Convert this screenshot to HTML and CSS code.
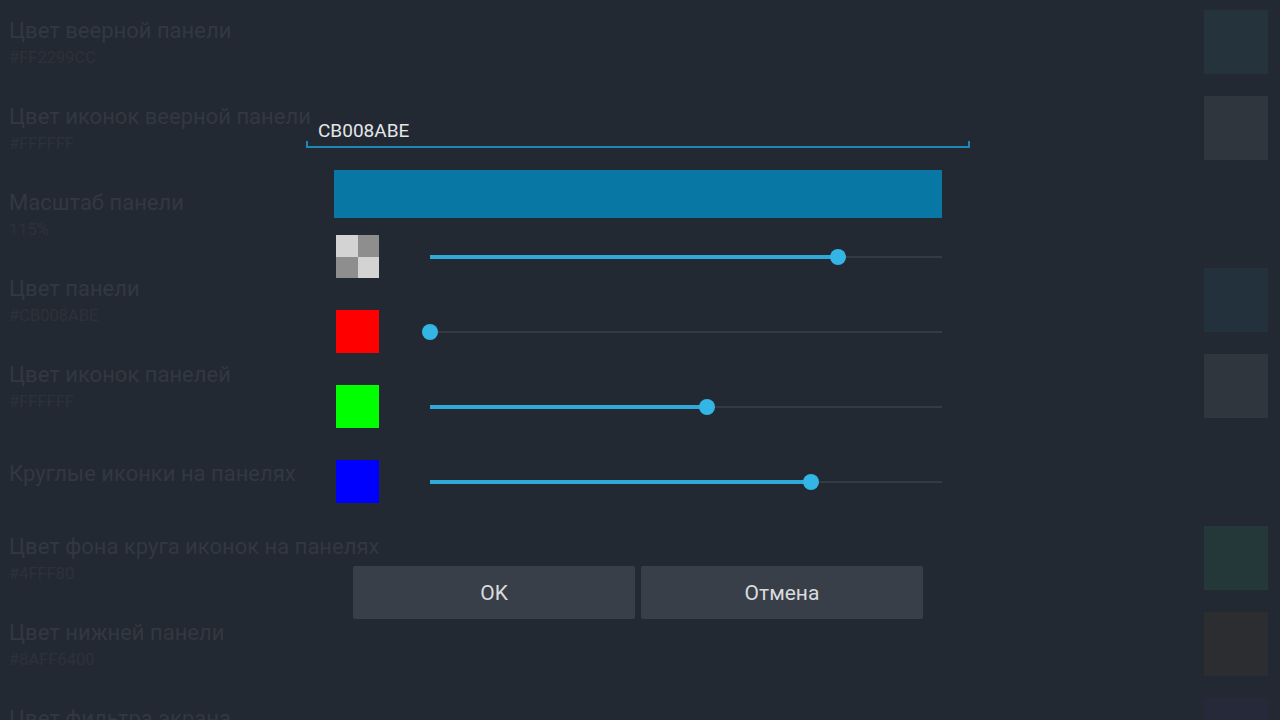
FILE: index.html
```html
<html>
    <head>
        <meta charset="utf-8">
        <meta name="viewport" content="width=device-width">
        <title>Цвет панели</title>
        <link rel="stylesheet" href="styles.css">
    </head>
    <body>
        <div id="list">
            <div class="item">
                <div class="text"><p class="title">Цвет веерной панели</p><p class="sub">#FF2299CC</p></div>
                <div class="swatch sw-fan"></div>
            </div>
            <div class="item">
                <div class="text"><p class="title">Цвет иконок веерной панели</p><p class="sub">#FFFFFF</p></div>
                <div class="swatch sw-white"></div>
            </div>
            <div class="item">
                <div class="text"><p class="title">Масштаб панели</p><p class="sub">115%</p></div>
            </div>
            <div class="item">
                <div class="text"><p class="title">Цвет панели</p><p class="sub">#CB008ABE</p></div>
                <div class="swatch sw-panel"></div>
            </div>
            <div class="item">
                <div class="text"><p class="title">Цвет иконок панелей</p><p class="sub">#FFFFFF</p></div>
                <div class="swatch sw-white"></div>
            </div>
            <div class="item">
                <div class="text"><p class="title">Круглые иконки на панелях</p></div>
            </div>
            <div class="item">
                <div class="text"><p class="title">Цвет фона круга иконок на панелях</p><p class="sub">#4FFF80</p></div>
                <div class="swatch sw-green"></div>
            </div>
            <div class="item">
                <div class="text"><p class="title">Цвет нижней панели</p><p class="sub">#8AFF6400</p></div>
                <div class="swatch sw-bottom"></div>
            </div>
            <div class="item">
                <div class="text"><p class="title">Цвет фильтра экрана</p><p class="sub">#00000000</p></div>
                <div class="swatch sw-filter"></div>
            </div>
        </div>

        <div id="dialog">
            <div class="hex-field">CB008ABE</div>
            <div class="preview"></div>

            <div class="channel">
                <div class="chip chip-alpha"><span></span><span></span><span></span><span></span></div>
                <div class="slider">
                    <div class="track"></div>
                    <div class="fill" style="width: 408px"></div>
                    <div class="thumb" style="left: 408px"></div>
                </div>
            </div>
            <div class="channel">
                <div class="chip chip-red"></div>
                <div class="slider">
                    <div class="track"></div>
                    <div class="fill" style="width: 0px"></div>
                    <div class="thumb" style="left: 0px"></div>
                </div>
            </div>
            <div class="channel">
                <div class="chip chip-green"></div>
                <div class="slider">
                    <div class="track"></div>
                    <div class="fill" style="width: 277px"></div>
                    <div class="thumb" style="left: 277px"></div>
                </div>
            </div>
            <div class="channel">
                <div class="chip chip-blue"></div>
                <div class="slider">
                    <div class="track"></div>
                    <div class="fill" style="width: 381px"></div>
                    <div class="thumb" style="left: 381px"></div>
                </div>
            </div>

            <div class="buttons">
                <button>OK</button>
                <button>Отмена</button>
            </div>
        </div>
    </body>
</html>
```

FILE: styles.css
```css
body {
    margin: 0;
    height: 720px;
    overflow: hidden;
    background-color: #232932;
    font-family: 'Roboto', sans-serif;
}
p {
    margin: 0;
}
#list {
    display: flex;
    flex-direction: column;
}
.item {
    height: 86px;
    flex-shrink: 0;
    display: flex;
    align-items: center;
    justify-content: space-between;
    padding: 0 12px 0 9px;
}
.text {
    padding-top: 2px;
}
.title {
    font-size: 22px;
    line-height: 28px;
    color: #323841;
}
.sub {
    font-size: 16.5px;
    line-height: 26px;
    color: #2c323a;
}
.swatch {
    width: 64px;
    height: 64px;
    margin-top: -3px;
}
.sw-fan { background-color: #25333c; }
.sw-white { background-color: #30363e; }
.sw-panel { background-color: #22313b; }
.sw-green { background-color: #24383a; }
.sw-bottom { background-color: #2b2d31; }
.sw-filter { background-color: #25293a; }

/* dialog lies over the dimmed list */
#dialog {
    position: absolute;
    left: 306px;
    top: 108px;
    width: 664px;
}
.hex-field {
    position: relative;
    height: 30px;
    padding: 8px 0 0 12px;
    font-size: 19px;
    line-height: 30px;
    color: #e4e6e8;
    border-bottom: 2px solid #1a88b8;
}
.hex-field::before,
.hex-field::after {
    content: "";
    position: absolute;
    bottom: 0;
    width: 2px;
    height: 5px;
    background-color: #1a88b8;
}
.hex-field::before { left: 0; }
.hex-field::after { right: 0; }
.preview {
    height: 48px;
    margin: 22px 28px 17px;
    background-color: #0877a3;
}
.channel {
    display: flex;
    align-items: center;
    height: 43px;
    margin: 0 0 32px 30px;
}
.chip {
    width: 43px;
    height: 43px;
}
.chip-alpha {
    display: grid;
    grid-template-columns: 1fr 1fr;
}
.chip-alpha span:nth-child(1),
.chip-alpha span:nth-child(4) { background-color: #d3d3d3; }
.chip-alpha span:nth-child(2),
.chip-alpha span:nth-child(3) { background-color: #8e8e8e; }
.chip-red { background-color: #ff0000; }
.chip-green { background-color: #00ff00; }
.chip-blue { background-color: #0000ff; }
.slider {
    position: relative;
    width: 512px;
    height: 18px;
    margin-left: 51px;
}
.track {
    position: absolute;
    left: 0;
    right: 0;
    top: 8px;
    height: 2px;
    background-color: #333a44;
}
.fill {
    position: absolute;
    left: 0;
    top: 7px;
    height: 4px;
    background-color: #2fa9da;
}
.thumb {
    position: absolute;
    top: 1px;
    width: 16px;
    height: 16px;
    margin-left: -8px;
    border-radius: 50%;
    background-color: #33b5e5;
}
.buttons {
    display: flex;
    gap: 6px;
    margin: 63px 47px 0;
}
button {
    flex: 1;
    height: 53px;
    border: none;
    border-radius: 2px;
    background-color: #393f48;
    color: #d9dbde;
    font-family: 'Roboto', sans-serif;
    font-size: 21px;
}
```
